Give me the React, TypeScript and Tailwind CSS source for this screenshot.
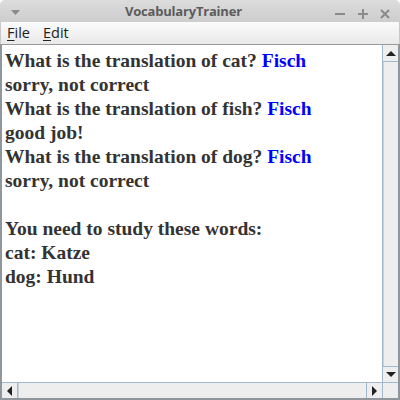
import React from "react";

function Tri({ dir }: { dir: "up" | "down" | "left" | "right" }) {
  const pts =
    dir === "up"
      ? "0,5 5,0 10,5"
      : dir === "down"
      ? "0,0 10,0 5,5"
      : dir === "left"
      ? "5,0 5,10 0,5"
      : "0,0 5,5 0,10";
  const w = dir === "up" || dir === "down" ? 10 : 5;
  const h = dir === "up" || dir === "down" ? 5 : 10;
  return (
    <svg width={w} height={h} viewBox={`0 0 ${w} ${h}`}>
      <polygon points={pts} fill="#222" />
    </svg>
  );
}

export default function App() {
  const serif = { fontFamily: '"Liberation Serif", "Times New Roman", serif' };
  const lines: { t: string; blue?: string }[] = [
    { t: "What is the translation of cat? ", blue: "Fisch" },
    { t: "sorry, not correct" },
    { t: "What is the translation of fish? ", blue: "Fisch" },
    { t: "good job!" },
    { t: "What is the translation of dog? ", blue: "Fisch" },
    { t: "sorry, not correct" },
    { t: "\u00a0" },
    { t: "You need to study these words:" },
    { t: "cat: Katze" },
    { t: "dog: Hund" },
  ];
  return (
    <div
      className="w-[400px] h-[400px] bg-white flex flex-col overflow-hidden"
      style={{ fontFamily: '"Open Sans", "DejaVu Sans", sans-serif' }}
    >
      {/* Title bar */}
      <div className="h-[22px] rounded-t-[5px] bg-gradient-to-b from-[#dcdcdc] to-[#cdcdcd] flex items-center relative">
        <div className="absolute left-[11px] top-[10px]">
          <svg width="9" height="5" viewBox="0 0 9 5">
            <polygon points="0,0 9,0 4.5,5" fill="#8a8a8a" />
          </svg>
        </div>
        <div className="absolute left-[125px] top-[2px] text-[13px] font-bold text-[#5c5c5c] leading-[18px] tracking-[-0.2px]">
          VocabularyTrainer
        </div>
        <div className="absolute left-[335px] top-[13px] w-[10px] h-[2px] bg-[#8a8a8a]" />
        <div className="absolute left-[358px] top-[13px] w-[10px] h-[2px] bg-[#8a8a8a]" />
        <div className="absolute left-[362px] top-[9px] w-[2px] h-[10px] bg-[#8a8a8a]" />
        <div className="absolute left-[380px] top-[9px]">
          <svg width="10" height="10" viewBox="0 0 10 10">
            <path d="M1 1 L9 9 M9 1 L1 9" stroke="#8a8a8a" strokeWidth="2" />
          </svg>
        </div>
      </div>
      {/* Menu bar */}
      <div className="h-[22px] bg-gradient-to-b from-[#fbfbfb] to-[#e9e9e9] border-x border-[#c8c8c8] flex items-center text-[14.5px] font-medium text-[#222222] leading-[18px]">
        <span className="ml-[6px]">
          <span className="underline underline-offset-2">F</span>ile
        </span>
        <span className="ml-[13px]">
          <span className="underline underline-offset-2">E</span>dit
        </span>
      </div>
      {/* Body */}
      <div className="flex-1 flex flex-col border-x-2 border-b-2 border-t border-[#8f969c] border-t-[#9a9a9a]">
        <div className="flex h-[337px]">
          <div
            className="flex-1 bg-white pt-[4px] pl-[3px] text-[19.5px] font-bold text-[#333333] leading-[24px] whitespace-nowrap overflow-hidden"
            style={serif}
          >
            {lines.map((l, i) => (
              <div key={i}>
                {l.t}
                {l.blue && <span className="text-[#0000ff]">{l.blue}</span>}
              </div>
            ))}
          </div>
          <div className="w-[16px] bg-[#eeeeee] border-l border-[#a3b8cc] flex flex-col">
            <div className="h-[17px] border-b border-[#a3b8cc] flex items-center justify-center">
              <Tri dir="up" />
            </div>
            <div className="flex-1 border-l border-[#c4d3e2]" />
            <div className="h-[16px] border-t border-[#a3b8cc] flex items-center justify-center">
              <Tri dir="down" />
            </div>
          </div>
        </div>
        <div className="flex-1 flex border-t border-[#a3b8cc]">
          <div className="w-[16px] bg-[#eeeeee] border-r border-[#a3b8cc] flex items-center justify-center">
            <Tri dir="left" />
          </div>
          <div className="flex-1 bg-[#eeeeee] border-l border-[#c4d3e2]" />
          <div className="w-[16px] bg-[#eeeeee] border-l border-[#a3b8cc] flex items-center justify-center">
            <Tri dir="right" />
          </div>
          <div className="w-[16px] bg-[#eeeeee] border-l border-[#a3b8cc]" />
        </div>
      </div>
    </div>
  );
}
